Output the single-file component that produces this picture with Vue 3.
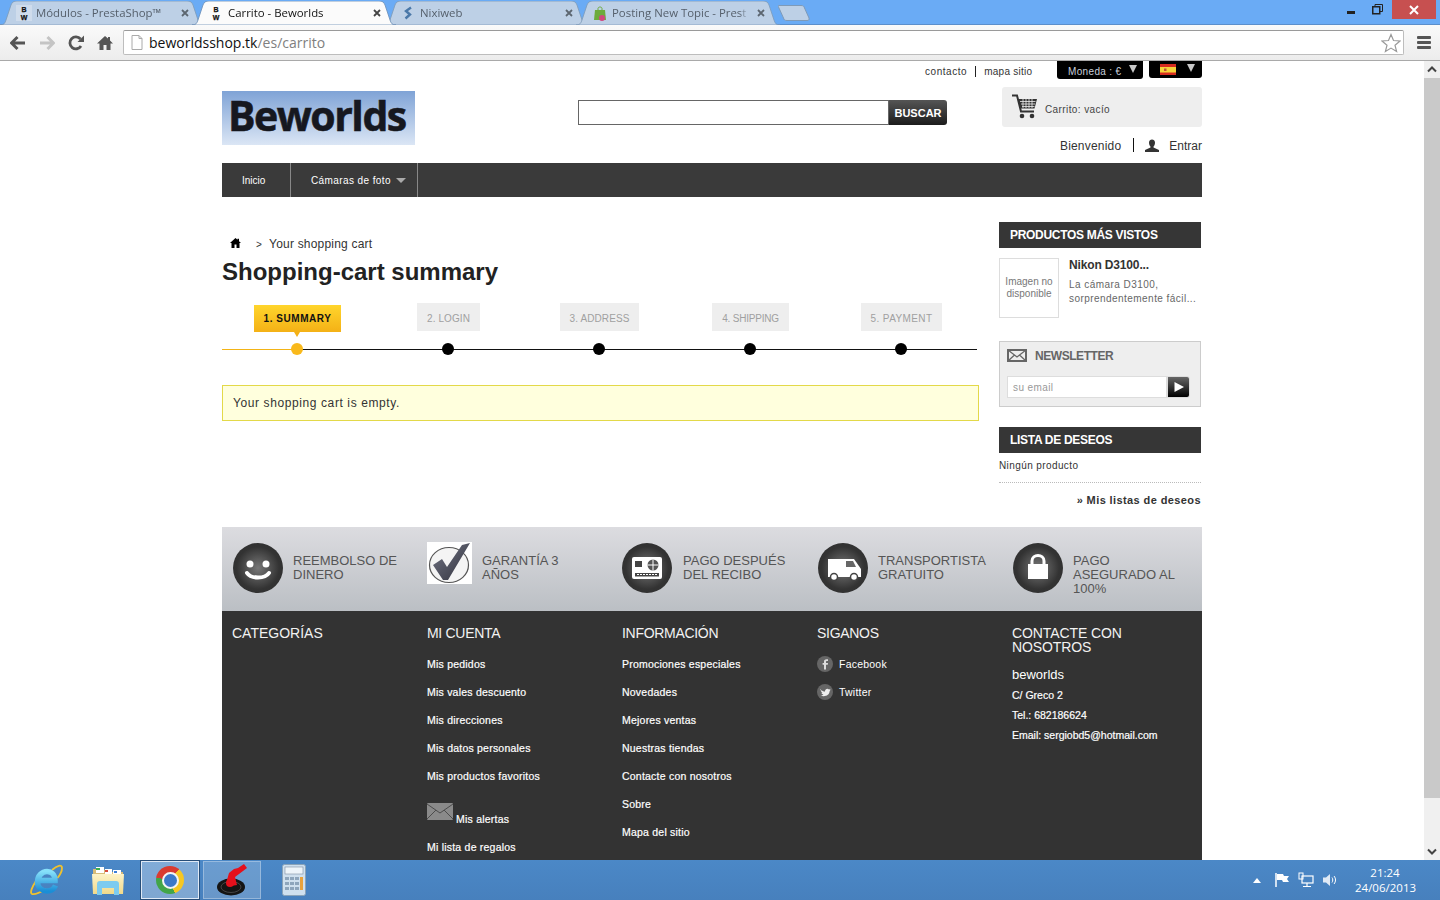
<script setup>
const tabs = [
  { title: 'Módulos - PrestaShop™', icon: 'bw', active: false },
  { title: 'Carrito - Beworlds', icon: 'bw', active: true },
  { title: 'Nixiweb', icon: 'nx', active: false },
  { title: 'Posting New Topic - Prest', icon: 'ps', active: false }
]
const steps = ['1. SUMMARY', '2. LOGIN', '3. ADDRESS', '4. SHIPPING', '5. PAYMENT']
const account = ['Mis pedidos', 'Mis vales descuento', 'Mis direcciones', 'Mis datos personales', 'Mis productos favoritos']
const info = ['Promociones especiales', 'Novedades', 'Mejores ventas', 'Nuestras tiendas', 'Contacte con nosotros', 'Sobre', 'Mapa del sitio']
</script>

<template>
  <div class="screen">
    <header class="titlebar">
      <div class="tabs">
        <div v-for="(t, i) in tabs" :key="t.title" class="tab" :class="{ active: t.active }">
          <svg class="tab-shape" viewBox="0 0 204 24" preserveAspectRatio="none">
            <path d="M0 24C4 24 5 22 6 19L11 4C12 1 14 0 17 0H187C190 0 192 1 193 4L198 19C199 22 200 24 204 24Z" />
          </svg>
          <svg v-if="t.icon === 'bw'" class="fav" :class="{ bwbg: i === 0 }" viewBox="0 0 16 16">
            <text x="8" y="6.500" text-anchor="middle" class="fav-b">B</text>
            <text x="8" y="14.500" text-anchor="middle" class="fav-b">W</text>
          </svg>
          <svg v-else-if="t.icon === 'nx'" class="fav" viewBox="0 0 16 16">
            <path d="M11 2.500 6 6 10 9.500 5.500 13.500" fill="none" stroke="#4a78a8" stroke-width="2.400" />
          </svg>
          <svg v-else class="fav" viewBox="0 0 16 16">
            <path d="M3 5H13L14 15H2Z" fill="#6cab3c" />
            <path d="M6 5V3.500C6 1.500 10 1.500 10 3.500V5" fill="none" stroke="#6cab3c" />
            <circle cx="10" cy="13" r="3" fill="#d0467e" />
          </svg>
          <span class="tab-title">{{ t.title }}</span>
          <svg class="tab-x" viewBox="0 0 8 8"><path d="M1 1 7 7M7 1 1 7" /></svg>
        </div>
        <svg class="newtab" viewBox="0 0 32 16"><path d="M1 .5H23C25 .5 26 1 26.500 3L31 13C31.500 15 30.500 15.500 29 15.500H9C7 15.500 6 15 5.500 13L.5 2C0 1 0 .5 1 .5Z" /></svg>
      </div>
      <div class="winctl">
        <span class="win-min"></span>
        <svg class="win-max" viewBox="0 0 11 11"><path d="M3 2.500V.5H10.500V7.500H8" fill="none" stroke="#222" /><rect x=".75" y="2.750" width="7" height="7" fill="none" stroke="#222" stroke-width="1.500" /></svg>
        <span class="win-close"><svg viewBox="0 0 10 10"><path d="M1 1 9 9M9 1 1 9" stroke="#fff" stroke-width="2" /></svg></span>
      </div>
    </header>

    <nav class="toolbar">
      <svg class="tool" viewBox="0 0 16 16"><path d="M7.500 2 1.500 8l6 6M2 8h13" fill="none" stroke="#555" stroke-width="3" /></svg>
      <svg class="tool" viewBox="0 0 16 16"><path d="M8.500 2l6 6-6 6M14 8H1" fill="none" stroke="#c4c4c4" stroke-width="3" /></svg>
      <svg class="tool" viewBox="0 0 16 16"><path d="M13 11A6 6 0 1 1 12.500 4" fill="none" stroke="#555" stroke-width="2.800" /><path d="M9.500 7H16V.5z" fill="#555" /></svg>
      <svg class="tool" viewBox="0 0 16 16"><path d="M8 1 0 8.500h2.500V15H6.500V10H9.500V15H13.500V8.500H16L13 5.500V2H11V3.500z" fill="#555" /></svg>
      <div class="omnibox">
        <svg class="page-ico" viewBox="0 0 12 15"><path d="M1 .5H8L11 3.500V14.500H1z" fill="#fff" stroke="#aaa" /><path d="M8 .5V3.500H11" fill="none" stroke="#aaa" /></svg>
        <span class="url"><b>beworldsshop.tk</b>/es/carrito</span>
        <svg class="star" viewBox="0 0 20 20"><path d="M10 1.500 12.500 7.500 19 8 14 12.200 15.600 18.500 10 15.100 4.400 18.500 6 12.200 1 8 7.500 7.500Z" fill="#fff" stroke="#9a9a9a" stroke-width="1.200" /></svg>
      </div>
      <div class="burger"><i></i><i></i><i></i></div>
    </nav>

    <div class="viewport">
      <main class="page">
        <div class="wrap">
          <div class="topbar">
            <span class="toplink">contacto</span>
            <span class="topsep"></span>
            <span class="toplink map">mapa sitio</span>
            <div class="drop money"><span>Moneda : €</span><i class="tri"></i></div>
            <div class="drop lang">
              <svg class="flag" viewBox="0 0 16 11"><rect width="16" height="11" fill="#d62b1f" /><rect y="3" width="16" height="5.500" fill="#f5d33a" /><rect x="4" y="4.500" width="2.500" height="2.500" fill="#c0503a" /></svg>
              <i class="tri"></i>
            </div>
          </div>

          <div class="head">
            <div class="logo"><span>Beworlds</span></div>
            <form class="search" @submit.prevent>
              <input class="search-in" type="text" />
              <button class="search-btn" type="button">BUSCAR</button>
            </form>
            <div class="headright">
              <div class="cart">
                <svg class="cart-ico" viewBox="0 0 25 25">
                  <path d="M0 1.500H5L9 17.500H22" fill="none" stroke="#333" stroke-width="2" />
                  <path d="M6 5H25L22.500 14.500H8.500z" fill="#333" />
                  <path d="M8 7.500H23.500M9 10H23M10 12.500H22.500M11 5V14M14 5V14M17 5V14M20 5V14" stroke="#eee" stroke-width=".8" />
                  <circle cx="10" cy="22" r="2.300" fill="#333" /><circle cx="20" cy="22" r="2.300" fill="#333" />
                </svg>
                <span>Carrito: vacío</span>
              </div>
              <div class="userrow">
                <span class="welcome">Bienvenido</span>
                <span class="usersep"></span>
                <svg class="user-ico" viewBox="0 0 14 13"><path d="M4 3.500C4-.5 10-.5 10 3.500 10 5.500 9.200 7 8.500 7.500V8.500L14 11V13H0V11L5.500 8.500V7.500C4.800 7 4 5.500 4 3.500Z" fill="#333" /></svg>
                <span class="enter">Entrar</span>
              </div>
            </div>
          </div>

          <div class="menu">
            <span class="menu-a first">Inicio</span>
            <span class="menu-a second">Cámaras de foto<i class="menu-tri"></i></span>
          </div>

          <div class="content">
            <section class="main">
              <div class="crumb">
                <svg class="home" viewBox="0 0 11 10"><path d="M5.500 0 0 5H1.500V10H4.500V6.500H6.500V10H9.500V5H11L9 3.200V.8H7.500V1.800z" fill="#000" /></svg>
                <span class="gt">&gt;</span>
                <span>Your shopping cart</span>
              </div>
              <h1 class="title">Shopping-cart summary</h1>
              <ol class="steps">
                <li v-for="(s, i) in steps" :key="s" class="step" :class="{ current: i === 0 }">
                  <span class="step-label">{{ s }}</span>
                  <span class="step-dot"></span>
                </li>
              </ol>
              <p class="notice">Your shopping cart is empty.</p>
            </section>

            <aside class="side">
              <h4 class="side-title">PRODUCTOS MÁS VISTOS</h4>
              <div class="product">
                <div class="noimg">Imagen no disponible</div>
                <div class="pinfo">
                  <div class="pname">Nikon D3100...</div>
                  <div class="pdesc">La cámara D3100,<br />sorprendentemente fácil...</div>
                </div>
              </div>
              <div class="news">
                <div class="news-head">
                  <svg class="news-ico" viewBox="0 0 20 13"><rect x="1" y="1" width="18" height="11" fill="#eee" stroke="#666" stroke-width="2" /><path d="M1 1 10 8 19 1M1 12 7.500 6M19 12 12.500 6" fill="none" stroke="#666" stroke-width="1.300" /></svg>
                  <span>NEWSLETTER</span>
                </div>
                <div class="news-form">
                  <div class="news-in">su email</div>
                  <div class="news-go"><svg viewBox="0 0 10 10"><path d="M.5 0 10 5 .5 10z" fill="#fff" /></svg></div>
                </div>
              </div>
              <h4 class="side-title">LISTA DE DESEOS</h4>
              <div class="wish-empty">Ningún producto</div>
              <div class="wish-link">» Mis listas de deseos</div>
            </aside>
          </div>

          <section class="reassure">
            <div class="re-col">
              <div class="round">
                <svg viewBox="0 0 50 50"><circle cx="17" cy="21" r="3.500" fill="#fff" /><circle cx="33" cy="21" r="3.500" fill="#fff" /><path d="M14 30C18 36 32 36 36 30" fill="none" stroke="#fff" stroke-width="4" stroke-linecap="round" /></svg>
              </div>
              <p>REEMBOLSO DE<br />DINERO</p>
            </div>
            <div class="re-col">
              <div class="checkbox">
                <svg viewBox="0 0 45 42">
                  <defs><linearGradient id="chk" x1="0" y1="0" x2="1" y2="1"><stop offset="0" stop-color="#747686" /><stop offset="1" stop-color="#2f313c" /></linearGradient></defs>
                  <ellipse cx="22" cy="23" rx="19.500" ry="17.500" fill="#f4f4f4" stroke="#555" stroke-width="1.200" />
                  <path d="M6 23 15 17 20 25 35 3 43 1 21 38 16 38Z" fill="url(#chk)" />
                </svg>
              </div>
              <p>GARANTÍA 3<br />AÑOS</p>
            </div>
            <div class="re-col">
              <div class="round">
                <svg viewBox="0 0 50 50"><rect x="10" y="14" width="30" height="22" rx="2" fill="#fff" /><rect x="13" y="18" width="7" height="6" fill="#444" /><circle cx="31" cy="22" r="5.500" fill="#555" /><path d="M25.500 22H36.500M31 16.500V27.500" stroke="#fff" /><path d="M13 30H37V33.500H13z" fill="#444" /><path d="M15 31.500H35" stroke="#fff" stroke-dasharray="2 1" /></svg>
              </div>
              <p>PAGO DESPUÉS<br />DEL RECIBO</p>
            </div>
            <div class="re-col">
              <div class="round">
                <svg viewBox="0 0 50 50"><path d="M10 16H36L43 26V34H10z" fill="#fff" /><path d="M28 18H35L38 24H28z" fill="#666" /><circle cx="16" cy="34" r="3.500" fill="#fff" stroke="#444" stroke-width="1.500" /><circle cx="36" cy="34" r="3.500" fill="#fff" stroke="#444" stroke-width="1.500" /></svg>
              </div>
              <p>TRANSPORTISTA<br />GRATUITO</p>
            </div>
            <div class="re-col">
              <div class="round">
                <svg viewBox="0 0 50 50"><rect x="15" y="21" width="20" height="15" fill="#fff" /><path d="M19 22V18C19 10.500 31 10.500 31 18V22" fill="none" stroke="#fff" stroke-width="3" /></svg>
              </div>
              <p>PAGO<br />ASEGURADO AL<br />100%</p>
            </div>
          </section>

          <footer class="foot">
            <div class="f-col"><h5>CATEGORÍAS</h5></div>
            <div class="f-col">
              <h5>MI CUENTA</h5>
              <ul>
                <li v-for="a in account" :key="a">{{ a }}</li>
                <li class="alerts">
                  <svg viewBox="0 0 26 17"><rect width="26" height="17" rx="1" fill="#8a8a8a" /><path d="M0 1 13 10 26 1M0 16 9 7M26 16 17 7" fill="none" stroke="#4c4c4c" /></svg>
                  <span>Mis alertas</span>
                </li>
                <li>Mi lista de regalos</li>
              </ul>
            </div>
            <div class="f-col">
              <h5>INFORMACIÓN</h5>
              <ul><li v-for="a in info" :key="a">{{ a }}</li></ul>
            </div>
            <div class="f-col">
              <h5>SIGANOS</h5>
              <ul>
                <li class="social">
                  <svg viewBox="0 0 16 16"><circle cx="8" cy="8" r="8" fill="#666" /><path d="M9 13.500V8.800H10.800L11 7H9V5.800C9 5.200 9.300 5 10 5H11V3.300H9.500C7.800 3.300 7 4.200 7 5.600V7H5.600V8.800H7V13.500z" fill="#ddd" /></svg>
                  Facebook
                </li>
                <li class="social">
                  <svg viewBox="0 0 16 16"><circle cx="8" cy="8" r="8" fill="#666" /><path d="M3 5C5 7 6.500 7.500 8 7.500 8 5 10.500 4 12 5.500L13.500 5 12.800 6.500 13.500 6.300C13 7 12.800 7.300 12.500 7.500 12.500 11 8 13.500 3.500 11.500 5 11.500 5.800 11 6.500 10.500 5.500 10.300 5 10 4.500 9H5.500C4.500 8.500 4 7.800 4 7L5 7.300C4 6.500 3 6 3 5Z" fill="#eee" /></svg>
                  Twitter
                </li>
              </ul>
            </div>
            <div class="f-col">
              <h5>CONTACTE CON<br />NOSOTROS</h5>
              <div class="c-name">beworlds</div>
              <div class="c-line">C/ Greco 2</div>
              <div class="c-line">Tel.: 682186624</div>
              <div class="c-line">Email: sergiobd5@hotmail.com</div>
            </div>
          </footer>
        </div>
      </main>
      <div class="scroll">
        <svg class="sc-arrow" viewBox="0 0 16 17"><path d="M4 10.500 8 6.500 12 10.500" fill="none" stroke="#444" stroke-width="2" /></svg>
        <div class="thumb"></div>
        <div class="track"></div>
        <svg class="sc-arrow" viewBox="0 0 16 17"><path d="M4 6.500 8 10.500 12 6.500" fill="none" stroke="#444" stroke-width="2" /></svg>
      </div>
    </div>

    <footer class="taskbar">
      <div class="tb-app ie">
        <svg viewBox="0 0 32 32">
          <defs><linearGradient id="ieg" x1="0" y1="0" x2="0" y2="1"><stop offset="0" stop-color="#86e0fa" /><stop offset="1" stop-color="#1b8ed6" /></linearGradient></defs>
          <path d="M22 6C27 1.500 32 0 32 4 32 7 30 11 27.500 14M6 17C2 23-.5 29 2 30 5 31 11 28 16 25" fill="none" stroke="#f0c22e" stroke-width="1.800" />
          <path d="M9.500 16.500H25C25 10.500 21 7.500 17 7.500 12 7.500 7.500 12 7.500 18 7.500 24 12.500 27 17 27 21 27 24 25 25.500 21.500" fill="none" stroke="url(#ieg)" stroke-width="5.500" />
        </svg>
      </div>
      <div class="tb-app folder">
        <svg viewBox="0 0 32 30">
          <defs><linearGradient id="fold" x1="0" y1="0" x2="0" y2="1"><stop offset="0" stop-color="#fdf3c8" /><stop offset="1" stop-color="#f0d98a" /></linearGradient></defs>
          <path d="M1 4H12L14 7H31V28H1Z" fill="#d8bc78" />
          <rect x="4" y="2" width="8" height="6" fill="#fff" /><rect x="4" y="3" width="4" height="2" fill="#3cae4c" />
          <rect x="13" y="4" width="7" height="5" fill="#fff" /><rect x="13" y="5" width="3" height="2" fill="#d84b3c" />
          <rect x="21" y="5" width="8" height="5" fill="#fff" /><rect x="22" y="6" width="3" height="2" fill="#3c7fd8" />
          <path d="M0 9H32L31 29H1Z" fill="url(#fold)" />
          <path d="M5 19C5 17 6 16 8 16H24C26 16 27 17 27 19V30H22V23H10V30H5Z" fill="#7ccbf0" />
        </svg>
      </div>
      <div class="tb-btn on">
        <div class="chrome"><span></span></div>
      </div>
      <div class="tb-btn open">
        <svg viewBox="0 0 32 32">
          <ellipse cx="15" cy="23" rx="14" ry="8.500" fill="#151515" />
          <ellipse cx="15" cy="23" rx="10" ry="5.500" fill="none" stroke="#444" />
          <path d="M11 16 15 22 21 21 19 13 31 4 28 0 22 4 18 5 13 9Z" fill="#e4101c" />
          <circle cx="14" cy="19" r="4" fill="#e4101c" />
        </svg>
      </div>
      <div class="tb-app calc">
        <svg viewBox="0 0 24 32">
          <rect x=".5" y=".5" width="23" height="31" rx="2" fill="#cfe0ee" stroke="#8aa3b8" />
          <rect x="3" y="3" width="18" height="7" fill="#eef5fa" stroke="#7d8da0" stroke-width=".6" />
          <g fill="#8ea6bc"><rect x="3" y="13" width="4" height="3" /><rect x="8" y="13" width="4" height="3" /><rect x="13" y="13" width="4" height="3" /><rect x="3" y="18" width="4" height="3" /><rect x="8" y="18" width="4" height="3" /><rect x="13" y="18" width="4" height="3" /><rect x="3" y="23" width="4" height="3" /><rect x="8" y="23" width="4" height="3" /><rect x="13" y="23" width="4" height="3" /></g>
          <rect x="18" y="13" width="3" height="13" fill="#e8a23c" />
        </svg>
      </div>
      <div class="tray">
        <svg class="tr-up" viewBox="0 0 8 5"><path d="M0 5 4 0 8 5z" fill="#fff" /></svg>
        <svg class="tr" viewBox="0 0 16 16"><path d="M2 1V15" stroke="#fff" stroke-width="1.500" /><path d="M3 2H9L10 4H15L13 7 15 10H9L8 8H3z" fill="#fff" /></svg>
        <svg class="tr" viewBox="0 0 16 16"><rect x="1" y="1" width="4" height="6" fill="none" stroke="#fff" /><rect x="4" y="4" width="11" height="7" fill="none" stroke="#fff" stroke-width="1.200" /><path d="M9 11V14M5 14.500H13" stroke="#fff" stroke-width="1.200" /></svg>
        <svg class="tr" viewBox="0 0 16 16"><path d="M1 5.500H4L8 2V14L4 10.500H1z" fill="#dfe9f5" /><path d="M10 5.500C11 7 11 9 10 10.500M12 4C14 6.500 14 9.500 12 12" fill="none" stroke="#fff" /></svg>
        <div class="clock"><span>21:24</span><span>24/06/2013</span></div>
      </div>
    </footer>
  </div>
</template>

<style>
html, body { margin: 0; padding: 0; overflow: hidden; }
</style>

<style scoped>
.screen { width: 1440px; height: 900px; display: flex; flex-direction: column; overflow: hidden; font-family: "Liberation Sans", Arial, sans-serif; color: #333; background: #fff; }
h1, h4, h5, p, ol, ul { margin: 0; padding: 0; list-style: none; }

/* browser chrome */
.titlebar { height: 25px; flex: none; display: flex; justify-content: space-between; background: #6aabf5; border-bottom: 1px solid #5c8fcb; box-sizing: border-box; }
.tabs { display: flex; align-items: flex-start; padding-top: 1px; }
.tab { position: relative; width: 204px; height: 24px; margin-right: -12px; display: flex; align-items: center; padding: 0 14px 1px 16px; box-sizing: border-box; font: 11.400px "Open Sans", sans-serif; color: #56606c; }
.tab-shape { position: absolute; inset: 0; width: 100%; height: 100%; fill: #bdd0e6; stroke: #7e9ab8; stroke-width: .8; }
.tab.active { z-index: 2; color: #111; }
.tab.active .tab-shape { fill: #fbfbfb; stroke: #6a8db5; }
.fav { position: relative; width: 16px; height: 16px; flex: none; margin-right: 4px; }
.bwbg { background: #cfdcec; }
.fav-b { font: bold 7px "Liberation Sans", sans-serif; fill: #111; stroke: #111; stroke-width: .25; }
.tab-title { position: relative; flex: 1; min-width: 0; white-space: nowrap; -webkit-mask-image: linear-gradient(to right, #000 93%, transparent); mask-image: linear-gradient(to right, #000 93%, transparent); }
.tab-x { position: relative; width: 8px; height: 8px; margin-left: 8px; margin-right: 1px; flex: none; fill: none; stroke: #5c6670; stroke-width: 1.800; }
.tab.active .tab-x { stroke: #444; }
.newtab { width: 32px; height: 16px; margin: 4px 0 0 10px; fill: #bdd0e6; stroke: #7e9ab8; position: relative; }
.winctl { display: flex; align-items: flex-start; padding-right: 4px; }
.win-min { width: 8px; height: 3px; background: #222; margin: 11px 17px 0 0; }
.win-max { width: 11px; height: 11px; margin: 4px 9px 0 0; }
.win-close { width: 44px; height: 19px; background: #c75050; display: flex; align-items: center; justify-content: center; }
.win-close svg { width: 10px; height: 10px; }

.toolbar { height: 36px; flex: none; box-sizing: border-box; display: flex; align-items: center; padding: 0 9px 0 10px; background: linear-gradient(#fafafa, #ececec); border-bottom: 1px solid #a9a9a9; }
.tool { width: 16px; height: 16px; margin-right: 13px; flex: none; }
.omnibox { flex: 1; height: 25px; margin: 0 13px 0 -3px; display: flex; align-items: center; background: #fff; border: 1px solid #bdbdbd; border-top-color: #9a9a9a; border-radius: 2px; box-sizing: border-box; padding: 0 2px 0 7px; }
.page-ico { width: 12px; height: 15px; margin-right: 6px; flex: none; }
.url { flex: 1; font: 14px "Open Sans", sans-serif; color: #808080; padding-bottom: 1px; }
.url b { font-weight: 400; color: #111; }
.star { width: 20px; height: 20px; }
.burger { width: 14px; flex: none; display: flex; flex-direction: column; gap: 2px; }
.burger i { height: 3px; background: #555; border-radius: 1px; }

.viewport { flex: 1; min-height: 0; display: flex; }
.page { flex: 1; min-width: 0; overflow: hidden; }
.wrap { width: 980px; margin: 0 auto; }

.topbar { height: 26px; display: flex; align-items: flex-start; font-size: 10px; letter-spacing: .55px; }
.toplink { margin-top: 4px; line-height: 13px; }
.toplink:first-child { margin-left: 703px; }
.toplink.map { letter-spacing: .25px; }
.topsep { width: 1px; height: 11px; background: #222; margin: 5px 8px 0 8px; }
.drop { background: #000; color: #c8d0dc; display: flex; align-items: center; box-sizing: border-box; border-radius: 0 0 3px 3px; letter-spacing: .35px; }
.money { width: 86px; height: 18px; margin-left: auto; padding-left: 11px; }
.lang { width: 53px; height: 17px; margin-left: 6px; padding-left: 11px; }
.money span { margin-top: 3px; }
.flag { width: 16px; height: 11px; }
.tri { width: 0; height: 0; border-left: 4.500px solid transparent; border-right: 4.500px solid transparent; border-top: 8px solid #c8c8c8; margin-left: 7px; margin-top: -3px; }
.lang .tri { margin-left: 11px; }

.head { height: 76px; display: flex; align-items: flex-start; }
.logo { width: 193px; height: 54px; margin-top: 4px; background: linear-gradient(#7fa3d6, #dbe6f5); display: flex; align-items: center; }
.logo span { font: bold 41px "Open Sans", sans-serif; color: #16181f; letter-spacing: -1.500px; margin-left: 6px; line-height: 50px; margin-top: -6px; -webkit-text-stroke: .6px #16181f; white-space: nowrap; }
.search { display: flex; margin: 13px 0 0 163px; }
.search-in { width: 311px; height: 25px; box-sizing: border-box; border: 1px solid #666; padding: 0; background: #fff; outline: 0; }
.search-btn { width: 58px; height: 25px; border: 0; border-radius: 0 3px 3px 0; padding: 0; background: linear-gradient(#555, #1c1c1c); color: #fff; font: bold 11px "Liberation Sans", sans-serif; }
.headright { width: 200px; margin-left: auto; }
.cart { height: 40px; box-sizing: border-box; background: #eee; border-radius: 3px; display: flex; align-items: center; padding-left: 10px; font-size: 10px; letter-spacing: .4px; color: #444; }
.cart-ico { width: 25px; height: 25px; margin: -2px 8px 0 0; }
.cart span { margin-top: 4px; }
.userrow { display: flex; align-items: center; justify-content: flex-end; margin-top: 11px; font-size: 12px; height: 16px; color: #333; }
.welcome { letter-spacing: .2px; }
.usersep { width: 1px; height: 14px; background: #111; margin: -2px 11px 0 12px; }
.user-ico { width: 14px; height: 13px; margin: -2px 10px 0 0; }

.menu { height: 34px; background: #3a3a3a; display: flex; color: #fff; font-size: 10px; }
.menu-a { display: flex; align-items: center; height: 34px; box-sizing: border-box; border-right: 1px solid #888; }
.first { width: 69px; padding-left: 20px; }
.second { width: 127px; padding-left: 20px; letter-spacing: .4px; }
.menu-tri { width: 0; height: 0; border-left: 5px solid transparent; border-right: 5px solid transparent; border-top: 5px solid #aaa; margin-left: 5px; }

.content { display: flex; margin-top: 25px; height: 305px; }
.main { width: 757px; flex: none; }
.crumb { display: flex; align-items: center; height: 16px; margin-top: 14px; padding-left: 8px; font-size: 12px; letter-spacing: .2px; color: #333; }
.home { width: 11px; height: 10px; margin-top: -3px; }
.gt { margin: 0 7px 0 15px; font-size: 10px; }
.title { font-size: 24px; line-height: 28px; margin-top: 6px; color: #222; font-weight: bold; }
.steps { display: flex; width: 755px; margin-top: 17px; position: relative; background: linear-gradient(#111, #111) no-repeat 0 46px / 100% 1px; }
.step { width: 151px; height: 54px; position: relative; display: flex; flex-direction: column; align-items: center; }
.step:first-child::before { content: ""; position: absolute; left: 0; width: 75px; top: 46px; height: 1px; background: #f3b416; }
.step-label { height: 28px; line-height: 31px; padding: 0 10px; background: #eee; color: #a0a0a0; font-size: 10px; letter-spacing: .1px; }
.step:nth-child(4) .step-label { letter-spacing: -.2px; }
.step:nth-child(5) .step-label { letter-spacing: .4px; }
.step-dot { position: absolute; top: 40px; width: 12px; height: 12px; margin-left: -1px; border-radius: 50%; background: #000; }
.current .step-label { height: 27px; margin-top: 2px; line-height: 27px; background: linear-gradient(#ffd52c, #f4b116); color: #111; font-weight: bold; letter-spacing: .55px; position: relative; }
.current .step-label::after { content: ""; position: absolute; left: 50%; margin-left: -3px; top: 27px; border-left: 3px solid transparent; border-right: 3px solid transparent; border-top: 5px solid #f4b116; }
.current .step-dot { background: #f9b91b; }
.notice { margin-top: 28px; height: 36px; box-sizing: border-box; border: 1px solid #e3d949; background: #ffd; padding-left: 10px; line-height: 35px; font-size: 12px; letter-spacing: .6px; color: #333; }

.side { width: 202px; margin-left: 20px; flex: none; }
.side-title { height: 26px; line-height: 26px; background: #363636; color: #fff; font-size: 12px; font-weight: bold; padding-left: 11px; letter-spacing: -.3px; }
.product { display: flex; margin-top: 10px; height: 60px; }
.noimg { width: 60px; height: 60px; box-sizing: border-box; border: 1px solid #ddd; display: flex; align-items: center; text-align: center; font-size: 10px; line-height: 12px; color: #777; padding: 0 1px; flex: none; }
.pinfo { margin-left: 10px; }
.pname { font-size: 12px; font-weight: bold; color: #333; line-height: 14px; letter-spacing: -.15px; }
.pdesc { margin-top: 6px; font-size: 10px; line-height: 14px; color: #666; letter-spacing: .45px; white-space: nowrap; }
.news { margin-top: 23px; height: 66px; box-sizing: border-box; border: 1px solid #ccc; background: #eee; padding: 7px 10px 0 7px; }
.news-head { display: flex; align-items: center; height: 13px; font-size: 12px; font-weight: bold; color: #666; letter-spacing: -.45px; }
.news-ico { width: 20px; height: 13px; margin-right: 8px; }
.news-form { display: flex; margin-top: 14px; }
.news-in { width: 160px; height: 22px; box-sizing: border-box; border: 1px solid #ddd; background: #fff; line-height: 21px; padding-left: 5px; font-size: 10px; color: #999; letter-spacing: .4px; }
.news-go { width: 23px; height: 22px; box-sizing: border-box; border: 1px solid #ddd; border-radius: 0 3px 3px 0; background: linear-gradient(#666, #000); display: flex; align-items: center; justify-content: center; }
.news-go svg { width: 10px; height: 10px; }
.news + .side-title { margin-top: 20px; }
.wish-empty { font-size: 10px; height: 29px; line-height: 26px; border-bottom: 1px dotted #bbb; letter-spacing: .4px; color: #333; }
.wish-link { text-align: right; font-size: 11px; font-weight: bold; margin-top: 11px; letter-spacing: .4px; color: #333; }

.reassure { height: 84px; display: flex; background: linear-gradient(#dcdce0, #bbbfc4); }
.re-col { width: 195px; box-sizing: border-box; padding: 16px 0 0 10px; display: flex; align-items: flex-start; gap: 10px; flex: none; }
.re-col p { font-size: 13px; line-height: 14px; color: #555; margin-top: 11px; white-space: nowrap; }
.re-col:nth-child(1) { width: 196px; padding-left: 11px; }
.re-col:nth-child(2) { padding-left: 9px; }
.re-col:nth-child(3) { padding-left: 9px; gap: 11px; }
.round { width: 50px; height: 50px; border-radius: 50%; background: radial-gradient(circle, #777 0, #333 60%, #2c2c2c 100%); flex: none; }
.round svg { display: block; width: 50px; height: 50px; }
.checkbox { width: 45px; height: 42px; background: #fff; flex: none; margin-top: -1px; }
.checkbox svg { display: block; width: 45px; height: 42px; }

.foot { background: #333; display: flex; height: 260px; color: #fff; }
.f-col { width: 195px; box-sizing: border-box; padding: 15px 0 0 10px; flex: none; }
.f-col h5 { font-size: 14px; line-height: 14px; font-weight: normal; color: #f2f2f2; letter-spacing: -.3px; }
.f-col:first-child h5 { letter-spacing: 0; }
.f-col:last-child h5 { letter-spacing: -.1px; }
.f-col ul { margin-top: 17px; }
.f-col li { font-size: 10.500px; line-height: 14px; height: 14px; margin-bottom: 14px; white-space: nowrap; letter-spacing: .22px; -webkit-text-stroke: .2px #fff; }
.alerts { display: flex; align-items: flex-end; height: 17px !important; margin-top: 20px; margin-bottom: 20px !important; }
.alerts svg { width: 26px; height: 17px; margin-right: 3px; }
.alerts span { margin-bottom: -6px; }
.social { display: flex; align-items: center; -webkit-text-stroke: 0 !important; }
.social svg { width: 16px; height: 16px; margin-right: 6px; flex: none; }
.c-name { font-size: 13px; margin-top: 14px; line-height: 14px; }
.c-line { font-size: 10.500px; line-height: 14px; margin-top: 6px; -webkit-text-stroke: .2px #fff; }

.scroll { width: 16px; flex: none; display: flex; flex-direction: column; background: #f0f0f0; }
.sc-arrow { width: 16px; height: 17px; flex: none; }
.thumb { height: 720px; background: #c9c9c9; flex: none; }
.track { flex: 1; }

.taskbar { height: 40px; flex: none; position: relative; display: flex; align-items: center; background: linear-gradient(#4b88c7, #4780bd); }
.tb-app { flex: none; display: flex; }
.ie { margin-left: 30px; } .ie svg { width: 32px; height: 32px; overflow: visible; }
.folder { margin-left: 30px; margin-right: 17px; } .folder svg { width: 32px; height: 30px; }
.tb-btn { width: 58px; height: 38px; box-sizing: border-box; margin-right: 4px; display: flex; align-items: center; justify-content: center; flex: none; }
.tb-btn.on { background: rgba(255,255,255,.3); border: 1px solid #dfe9f5; outline: 1px solid #264d78; }
.tb-btn.open { background: rgba(255,255,255,.18); border: 1px solid rgba(255,255,255,.3); }
.tb-btn.open svg { width: 32px; height: 32px; }
.chrome { width: 28px; height: 28px; border-radius: 50%; background: conic-gradient(#d93b30 0 40deg, #f6c722 40deg 160deg, #42a548 160deg 280deg, #d93b30 280deg); display: flex; align-items: center; justify-content: center; }
.chrome span { width: 13px; height: 13px; border-radius: 50%; background: #3c78c8; border: 2px solid #f4f4f4; }
.calc { margin-left: 17px; } .calc svg { width: 24px; height: 32px; }
.tray { margin-left: auto; display: flex; align-items: center; color: #fff; padding-right: 25px; }
.tr-up { width: 8px; height: 5px; margin-right: 13px; }
.tr { width: 16px; height: 16px; margin-right: 8px; }
.clock { width: 60px; margin-left: 9px; text-align: center; display: flex; flex-direction: column; font: 11.500px/15px "Open Sans", sans-serif; }
</style>
